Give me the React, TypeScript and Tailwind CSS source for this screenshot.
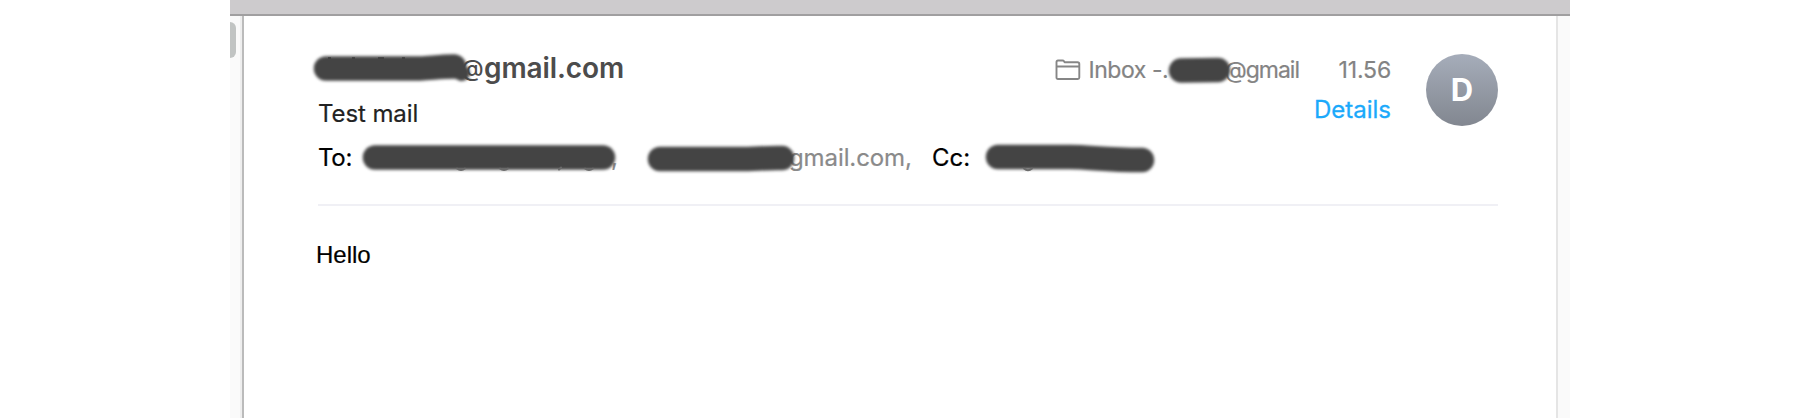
import React from "react";

function Marker({ d, width = 24 }: { d: string; width?: number }) {
  return (
    <path
      d={d}
      fill="none"
      stroke="#444444"
      strokeWidth={width}
      strokeLinecap="round"
      strokeLinejoin="round"
    />
  );
}

function Redactions() {
  return (
    <svg
      className="pointer-events-none absolute left-0 top-0"
      width="1800"
      height="418"
      viewBox="0 0 1800 418"
    >
      <defs>
        <filter
          id="soft"
          x="0"
          y="0"
          width="1800"
          height="418"
          filterUnits="userSpaceOnUse"
          colorInterpolationFilters="sRGB"
        >
          <feGaussianBlur stdDeviation="1.8" />
        </filter>
      </defs>
      <g filter="url(#soft)">
        <Marker width={24.5} d="M326 68.500 L420 68.500 C432 68 440 66.500 454 66.500" />
        <Marker width={16} d="M452 68 L462 73" />
        <Marker width={24.5} d="M375 157.500 L455 157.500 L603 157.500" />
        <Marker width={24.5} d="M660 159 L740 159 C755 159 768 157.500 782 158" />
        <Marker width={24.5} d="M998 157 L1070 157 C1090 157 1105 160 1142 160" />
        <Marker width={24.5} d="M1181 70.500 L1218 70" />
      </g>
      <g fill="none" stroke="#6a6a6a" strokeWidth="2" strokeLinecap="round">
        <path d="M457 168.500 q4 3 8 0M500 168.500 q4 3 8 0M585 168.500 q4 3 8 0M559 169.500 l2 -2" />
        <path d="M1024 168.500 q4 3.500 8 0" />
      </g>
      <g fill="#3a3a3a" opacity="0.7">
        <rect x="328" y="57" width="3" height="2" />
        <rect x="352" y="57" width="3" height="2" />
        <rect x="378" y="57" width="6" height="2" />
        <rect x="402" y="57" width="3" height="2" />
      </g>
    </svg>
  );
}

function FolderIcon() {
  return (
    <svg width="26" height="22" viewBox="0 0 26 22" fill="none" stroke="#868686" strokeWidth="1.900" strokeLinejoin="round">
      <path d="M1.500 18.500 V3 Q1.500 1.500 3 1.500 H7.500 Q8.500 1.500 9 2.300 L9.600 3.300 H22.500 Q24.300 3.300 24.300 5 V18.500 Q24.300 20 22.800 20 H3 Q1.500 20 1.500 18.500 Z M1.500 7.500 H24.300" />
    </svg>
  );
}

export default function App() {
  return (
    <div className="relative flex h-[418px] w-[1800px] justify-center overflow-hidden bg-white font-['Inter',sans-serif]">
      <div className="flex w-[1340px] flex-col">
        <div className="h-4 shrink-0 border-b-2 border-[#a09fa0] bg-[#cdcbcd]" />
        <div className="flex flex-1">
          <div className="w-3.5 shrink-0 border-r-2 border-[#bbbbbb] bg-[#fafafa]">
            <div className="h-full border-r-2 border-[#eeeeee] pt-1.5">
              <div className="h-9 w-1.5 rounded-r-[6px] bg-[#c1c4c3]" />
            </div>
          </div>
          <main className="flex-1 pl-[74px] pr-[58px]">
            <header className="flex h-[190px] justify-between border-b-2 border-[#f0f0f5] pt-9">
              <div className="flex flex-col whitespace-pre text-2xl leading-8">
                <div className="flex h-[46px] pl-[143px] text-[28px] font-semibold leading-8 text-[#4c4c4c]">
                  <span className="w-[23px] text-[23px] font-medium">@</span>
                  <span className="tracking-[-0.1px]">gmail.com</span>
                </div>
                <div className="h-11 tracking-[-0.1px] text-[#222222] [-webkit-text-stroke:0.2px]">Test mail</div>
                <div className="flex text-[#8a8a8a] [-webkit-text-stroke:0.2px]">
                  <span className="w-[293px] tracking-[-0.3px] text-black">To:</span>
                  <span className="w-[178px]">,</span>
                  <span className="w-[143px] tracking-[-0.1px]">gmail.com,</span>
                  <span className="text-black">Cc:</span>
                </div>
              </div>
              <div className="flex">
                <div className="mr-[35px] flex flex-col items-end whitespace-pre pt-0.5 text-2xl leading-8 text-[#838383]">
                  <div className="flex h-10 text-[23px] [-webkit-text-stroke:0.2px]">
                    <span className="w-[33px] pt-[5px]"><FolderIcon /></span>
                    <span className="w-[136px] tracking-[-0.45px]">Inbox -.</span>
                    <span className="w-[114px] tracking-[-1px]">@gmail</span>
                    <span className="tracking-[-0.15px]">11.56</span>
                  </div>
                  <div className="text-[#1ba9fb] [-webkit-text-stroke:0.3px]">Details</div>
                </div>
                <div className="mt-0.5 flex h-[72px] w-[72px] items-center justify-center rounded-full bg-linear-to-b from-[#a6adba] to-[#828790] text-[31px] font-bold text-white">
                  D
                </div>
              </div>
            </header>
            <p className="-ml-0.5 pt-[33px] font-['Liberation_Sans',sans-serif] text-2xl leading-8 text-black [-webkit-text-stroke:0.2px]">Hello</p>
          </main>
          <div className="w-3.5 border-l-2 border-[#e5e5e5] bg-[#fafafa]" />
        </div>
      </div>
      <Redactions />
    </div>
  );
}
